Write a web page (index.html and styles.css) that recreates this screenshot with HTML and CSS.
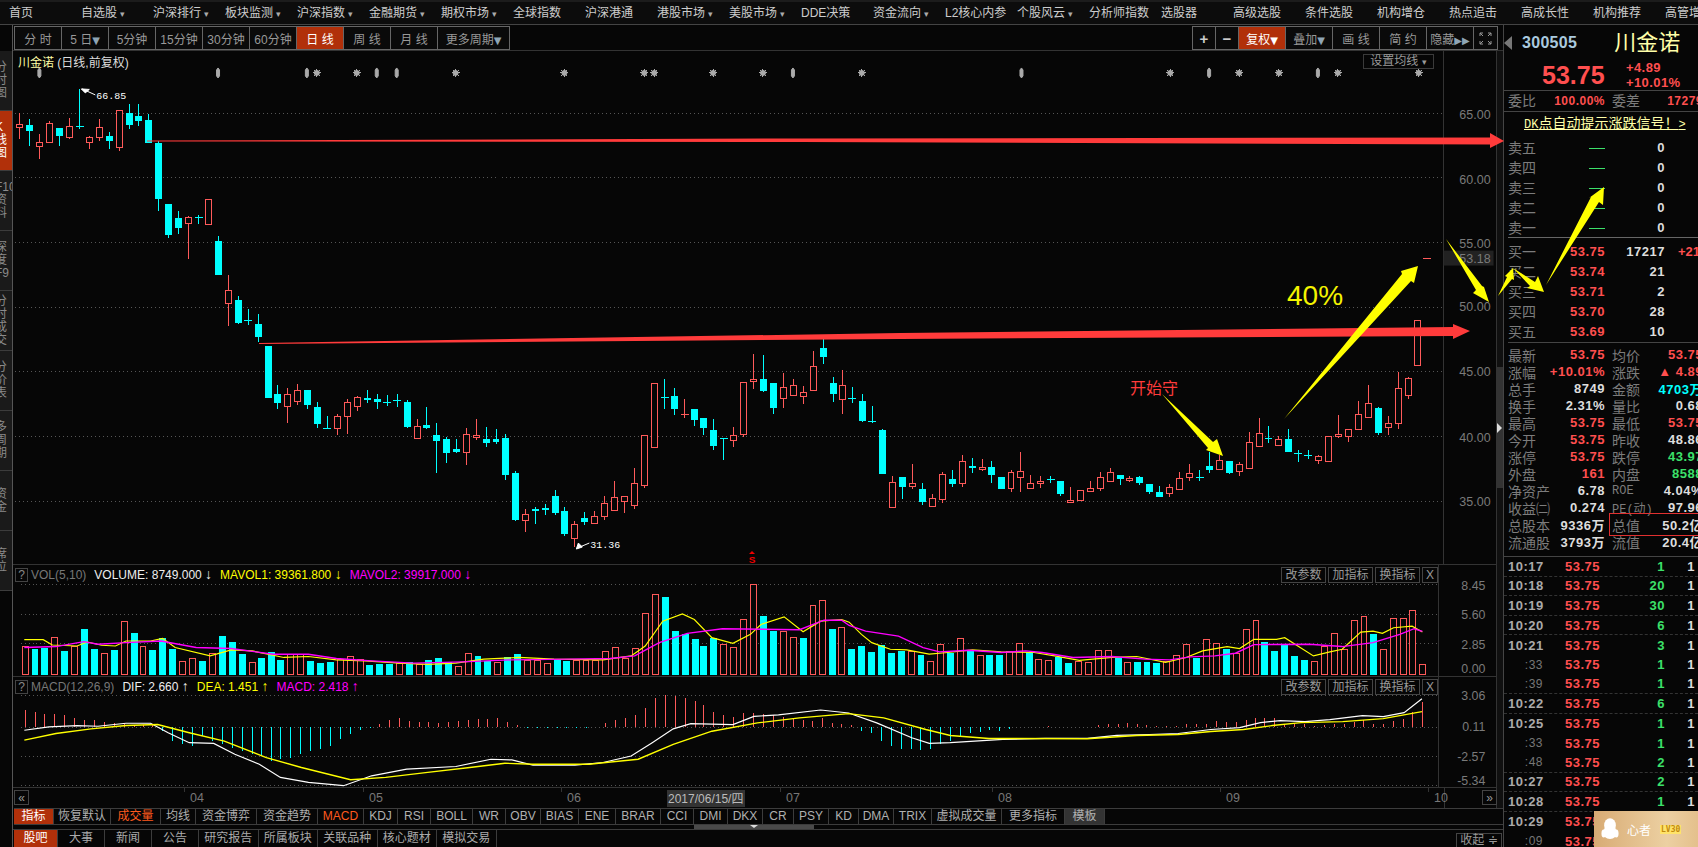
FILE: index.html
```html
<!DOCTYPE html>
<html lang="zh-CN">
<head>
  <meta charset="UTF-8" />
  <title>川金诺 300505 日线</title>
  <link rel="stylesheet" href="styles.css">
</head>
<body>
  <nav class="topnav">
    <a>首页</a><a class="menu">自选股</a><a class="menu">沪深排行</a><a class="menu">板块监测</a>
    <a class="menu">沪深指数</a><a class="menu">金融期货</a><a class="menu">期权市场</a><a>全球指数</a>
    <a>沪深港通</a><a class="menu">港股市场</a><a class="menu">美股市场</a><a>DDE决策</a>
    <a class="menu">资金流向</a><a>L2核心内参</a><a class="menu">个股风云</a><a>分析师指数</a>
    <a>选股器</a><a>高级选股</a><a>条件选股</a><a>机构增仓</a><a>热点追击</a><a>高成长性</a><a>机构推荐</a><a>高管增持</a>
  </nav>

  <div class="workspace">
    <aside class="sidetabs">
      <div class="sidetab"><span>分<br>时<br>图</span></div>
      <div class="sidetab on"><span>K<br>线<br>图</span></div>
      <div class="sidetab"><span>F10<br>资<br>料</span></div>
      <div class="sidetab"><span>深<br>度<br>F9</span></div>
      <div class="sidetab"><span>分<br>时<br>成<br>交</span></div>
      <div class="sidetab"><span>分<br>价<br>表</span></div>
      <div class="sidetab"><span>多<br>周<br>期</span></div>
      <div class="sidetab"><span>资<br>金</span></div>
      <div class="sidetab"><span>席<br>位</span></div>
    </aside>

    <main class="center">
      <div class="toolbar">
        <div class="btn-group">
          <button>分 时</button><button>5 日<i>▼</i></button><button>5分钟</button><button>15分钟</button>
          <button>30分钟</button><button>60分钟</button><button class="on">日 线</button><button>周 线</button>
          <button>月 线</button><button class="wide">更多周期<i>▼</i></button>
        </div>
        <div class="btn-group right">
          <button class="tiny">+</button><button class="tiny">−</button><button class="on">复权<i>▼</i></button>
          <button>叠加<i>▼</i></button><button>画 线</button><button>简 约</button><button>隐藏<i>▶▶</i></button>
          <button class="tiny">
            <svg class="fs-icon" viewBox="0 0 13 13"><path d="M1 4V1h3M9 1h3v3M12 9v3H9M4 12H1V9M1 1l3 3M12 1L9 4M12 12L9 9M1 12l3-3" /></svg>
          </button>
        </div>
      </div>

      <div class="chart-row">
        <div class="chart-col">
          <section class="pane pane-k">
            <svg id="kSvg" class="plot" viewBox="13 51 1484 514"></svg>
            <div class="pane-head">
              <span class="stock-title"><b>川金诺</b> (日线,前复权)</span>
              <span class="ma-set">设置均线 <i>▾</i></span>
            </div>
          </section>

          <section class="pane pane-vol">
            <svg id="volSvg" class="plot" viewBox="13 565 1484 112"></svg>
            <div class="pane-head small">
              <span class="help">?</span>
              <span class="c-gray">VOL(5,10)</span>
              <span class="c-white">VOLUME: 8749.000 <i class="ar">↓</i></span>
              <span class="c-yellow">MAVOL1: 39361.800 <i class="ar">↓</i></span>
              <span class="c-pink">MAVOL2: 39917.000 <i class="ar">↓</i></span>
              <div class="pane-btns"><button>改参数</button><button>加指标</button><button>换指标</button><button class="close">X</button></div>
            </div>
          </section>

          <section class="pane pane-macd">
            <svg id="macdSvg" class="plot" viewBox="13 677 1484 111"></svg>
            <div class="pane-head small">
              <span class="help">?</span>
              <span class="c-gray">MACD(12,26,9)</span>
              <span class="c-white">DIF: 2.660 <i class="ar">↑</i></span>
              <span class="c-yellow">DEA: 1.451 <i class="ar">↑</i></span>
              <span class="c-pink">MACD: 2.418 <i class="ar">↑</i></span>
              <div class="pane-btns"><button>改参数</button><button>加指标</button><button>换指标</button><button class="close">X</button></div>
            </div>
          </section>

          <svg id="timeSvg" class="timeaxis" viewBox="13 788 1484 20"></svg>
        </div>
        <div class="scrollcol"><div class="thumb"><i></i></div></div>
      </div>

      <div class="indicators">
        <a class="on">指标</a><a>恢复默认</a><a class="hot">成交量</a><a>均线</a><a>资金博弈</a><a>资金趋势</a>
        <a class="hot">MACD</a><a>KDJ</a><a>RSI</a><a>BOLL</a><a>WR</a><a>OBV</a><a>BIAS</a><a>ENE</a><a>BRAR</a><a>CCI</a>
        <a>DMI</a><a>DKX</a><a>CR</a><a>PSY</a><a>KD</a><a>DMA</a><a>TRIX</a><a>虚拟成交量</a><a>更多指标</a><a class="tpl">模板</a>
      </div>
      <div class="hscroll"><div class="hthumb"><i></i></div></div>
      <div class="bottomtabs">
        <a class="on">股吧</a><a>大事</a><a>新闻</a><a>公告</a><a>研究报告</a><a>所属板块</a><a>关联品种</a><a>核心题材</a><a>模拟交易</a>
        <span class="collapse">收起 ≑</span>
      </div>
    </main>

    <aside class="quote">
      <div class="code-row">
        <i class="back"></i><span class="code">300505</span><span class="name">川金诺</span>
      </div>
      <div class="price-row">
        <span class="last">53.75</span>
        <div class="change"><span>+4.89</span><span>+10.01%</span></div>
      </div>
      <div class="ratio-row">
        <div class="kv"><label>委比</label><b class="red">100.00%</b></div>
        <div class="kv"><label>委差</label><b class="red">17279</b></div>
      </div>
      <a class="promo"><span class="dk">DK</span>点自动提示涨跌信号！<span class="dk">&gt;</span></a>

      <div class="book asks">
        <div class="level"><label>卖五</label><span><i class="dash"></i></span><b>0</b></div>
        <div class="level"><label>卖四</label><span><i class="dash"></i></span><b>0</b></div>
        <div class="level"><label>卖三</label><span><i class="dash"></i></span><b>0</b></div>
        <div class="level"><label>卖二</label><span><i class="dash"></i></span><b>0</b></div>
        <div class="level"><label>卖一</label><span><i class="dash"></i></span><b>0</b></div>
      </div>
      <div class="book bids">
        <div class="level"><label>买一</label><span class="red">53.75</span><b>17217</b><em>+21</em></div>
        <div class="level"><label>买二</label><span class="red">53.74</span><b>21</b></div>
        <div class="level"><label>买三</label><span class="red">53.71</span><b>2</b></div>
        <div class="level"><label>买四</label><span class="red">53.70</span><b>28</b></div>
        <div class="level"><label>买五</label><span class="red">53.69</span><b>10</b></div>
      </div>

      <div class="stats">
        <div class="kv"><label>最新</label><b class="red">53.75</b></div><div class="kv"><label>均价</label><b class="red">53.75</b></div>
        <div class="kv"><label>涨幅</label><b class="red">+10.01%</b></div><div class="kv"><label>涨跌</label><b class="red">▲ 4.89</b></div>
        <div class="kv"><label>总手</label><b>8749</b></div><div class="kv"><label>金额</label><b class="cyan">4703万</b></div>
        <div class="kv"><label>换手</label><b>2.31%</b></div><div class="kv"><label>量比</label><b>0.68</b></div>
        <div class="kv"><label>最高</label><b class="red">53.75</b></div><div class="kv"><label>最低</label><b class="red">53.75</b></div>
        <div class="kv"><label>今开</label><b class="red">53.75</b></div><div class="kv"><label>昨收</label><b>48.86</b></div>
        <div class="kv"><label>涨停</label><b class="red">53.75</b></div><div class="kv"><label>跌停</label><b class="green">43.97</b></div>
        <div class="kv"><label>外盘</label><b class="red">161</b></div><div class="kv"><label>内盘</label><b class="green">8588</b></div>
        <div class="kv"><label>净资产</label><b>6.78</b></div><div class="kv"><label class="latin">ROE</label><b>4.04%</b></div>
        <div class="kv"><label>收益㈡</label><b>0.274</b></div><div class="kv"><label class="latin">PE(动)</label><b>97.96</b></div>
        <div class="kv"><label>总股本</label><b>9336万</b></div><div class="kv boxed"><label>总值</label><b>50.2亿</b></div>
        <div class="kv"><label>流通股</label><b>3793万</b></div><div class="kv"><label>流值</label><b>20.4亿</b></div>
      </div>

      <div class="ticks">
        <div class="tick end"><b>10:17</b><span>53.75</span><em>1</em><u>1</u></div>
        <div class="tick end"><b>10:18</b><span>53.75</span><em>20</em><u>1</u></div>
        <div class="tick end"><b>10:19</b><span>53.75</span><em>30</em><u>1</u></div>
        <div class="tick end"><b>10:20</b><span>53.75</span><em>6</em><u>1</u></div>
        <div class="tick"><b>10:21</b><span>53.75</span><em>3</em><u>1</u></div>
        <div class="tick"><b class="sec">:33</b><span>53.75</span><em>1</em><u>1</u></div>
        <div class="tick end"><b class="sec">:39</b><span>53.75</span><em>1</em><u>1</u></div>
        <div class="tick end"><b>10:22</b><span>53.75</span><em>6</em><u>1</u></div>
        <div class="tick"><b>10:25</b><span>53.75</span><em>1</em><u>1</u></div>
        <div class="tick"><b class="sec">:33</b><span>53.75</span><em>1</em><u>1</u></div>
        <div class="tick end"><b class="sec">:48</b><span>53.75</span><em>2</em><u>1</u></div>
        <div class="tick end"><b>10:27</b><span>53.75</span><em>2</em><u>1</u></div>
        <div class="tick end"><b>10:28</b><span>53.75</span><em>1</em><u>1</u></div>
        <div class="tick"><b>10:29</b><span>53.75</span><em>1</em><u>1</u></div>
        <div class="tick"><b class="sec">:09</b><span>53.75</span><em>1</em><u>1</u></div>
      </div>
    </aside>
  </div>

  <!-- hand-drawn marks on top of the chart -->
  <svg class="marks" viewBox="0 0 1698 847">
    <polygon class="mark-red" points="147,140.5 800,138.5 1490,137.5 1490,133 1504,141 1490,148 1490,144.5 800,142 147,141.5" />
    <polygon class="mark-red" points="259,343 900,333 1453,327 1453,324 1470,331 1453,339 1453,336 900,339 259,344" />
    <polygon class="mark-yellow" points="1162,394 1213,442 1217,439 1223,456 1206,450 1208,448" />
    <polygon class="mark-yellow" points="1284,419 1402,274 1401,271 1418,266 1414,283 1411,281" />
    <polygon class="mark-yellow" points="1446,239 1476,290 1473,293 1489,302 1484,287 1482,286" />
    <polygon class="mark-yellow" points="1498,296 1507,277 1505,276 1513,268 1514,280 1512,279" />
    <polygon class="mark-yellow" points="1513,268 1535,282 1538,276 1544,292 1527,288 1530,286" />
    <polygon class="mark-yellow" points="1546,285 1591,197 1589,198 1604,187 1603,205 1599,202" />
    <text class="mark-pct" x="1287" y="305">40%</text>
    <text class="mark-note" x="1130" y="394">开始守</text>
  </svg>

  <div class="qq-toast">
    <svg class="penguin" viewBox="0 0 20 26">
      <ellipse cx="10" cy="9" rx="6.5" ry="8" />
      <ellipse cx="10" cy="17" rx="8" ry="7" />
      <ellipse cx="3" cy="18" rx="2.5" ry="4.5" />
      <ellipse cx="17" cy="18" rx="2.5" ry="4.5" />
    </svg>
    <span>心者</span>
    <b>LV30</b>
  </div>

  <script src="chart.js"></script>
</body>
</html>
```

FILE: styles.css
```css
* { box-sizing: border-box; }
html, body { margin: 0; height: 847px; overflow: hidden; }
body {
  position: relative; width: 1698px; background: #060606; color: #bbb;
  font: 12px "Liberation Sans", "Noto Sans CJK SC", sans-serif;
}
i, em, u { font-style: normal; text-decoration: none; }

.topnav {
  display: grid; grid-template-columns: repeat(24, 72px); padding-left: 9px;
  height: 25px; line-height: 22px; background: #0c0c0c; overflow: hidden;
  border-top: 2px solid #1c1c1c; border-bottom: 1px solid #444; color: #ccc;
}
.topnav a { white-space: nowrap; }
.topnav .menu::after { content: " ▾"; font-size: 9px; color: #aaa; }

.workspace { display: flex; height: 822px; }

.sidetabs { width: 13px; padding-top: 26px; border-right: 1px solid #555; overflow: hidden; }
.sidetab {
  height: 60px; display: flex; align-items: center; background: #1a1a1a;
  border-bottom: 1px solid #3c3c3c; color: #8a8a8a; line-height: 13px;
}
.sidetab span { display: block; margin-left: -5px; width: 12px; white-space: nowrap; }
.sidetab.on { background: #b1300a; color: #fff; }

.center { width: 1490px; display: flex; flex-direction: column; }
.toolbar {
  height: 26px; flex: none; display: flex; justify-content: space-between;
  padding: 1px 5px 1px 1px; border-bottom: 1px solid #333;
}
.btn-group { display: flex; height: 24px; border: 1px solid #666; }
.btn-group button {
  width: 47px; padding: 0; background: #0a0a0a; color: #999; border: 0; border-right: 1px solid #666;
  font: 12px "Liberation Sans", "Noto Sans CJK SC", sans-serif; white-space: nowrap;
}
.btn-group button:last-child { border-right: 0; }
.btn-group button.wide { width: 71px; }
.btn-group button.tiny { width: 23px; font-size: 15px; font-weight: 700; color: #ccc; }
.btn-group button.on { background: #b1300a; color: #fff; }
.btn-group i { font-size: 10px; color: #8fa5b5; font-family: "DejaVu Sans", sans-serif; }
.btn-group .on i { color: #fff; }
.fs-icon { display: block; width: 13px; height: 13px; margin: auto; fill: none; stroke: #999; stroke-width: 1; }

.chart-row { display: flex; height: 757px; flex: none; }
.chart-col { width: 1484px; border-right: 1px solid #333; }
.scrollcol { width: 6px; background: #101010; padding-top: 316px; }
.thumb { height: 121px; background: #333; display: flex; align-items: center; }
.thumb i { width: 0; height: 0; border: 5px solid transparent; border-left: 5px solid #ddd; }

.pane { position: relative; border-bottom: 1px solid #333; }
.pane-k { height: 514px; }
.pane-vol { height: 112px; }
.pane-macd { height: 111px; }
.plot { position: absolute; left: 0; top: 0; width: 1484px; height: 100%; display: block; }
.pane-head { position: relative; display: flex; align-items: center; gap: 6px; padding: 2px 58px 0 2px; white-space: nowrap; }
.pane-k .pane-head { padding: 2px 62px 0 5px; justify-content: space-between; }
.stock-title { color: #ddd; }
.stock-title b { font-weight: 400; color: #ffffa8; }
.ma-set { width: 71px; height: 15px; line-height: 13px; border: 1px solid #3a3a3a; color: #999; text-align: center; }
.ma-set i { font-size: 9px; }
.help { width: 13px; height: 14px; line-height: 12px; margin-right: -3px; border: 1px solid #444; text-align: center; color: #888; }
.c-gray { color: #777; margin-right: 2px; }
.c-white { color: #eee; }
.c-yellow { color: #ff0; margin-left: 2px; }
.c-pink { color: #f0f; margin-left: 2px; }
.ar { font-size: 14px; line-height: 12px; }
.pane-btns { margin-left: auto; display: flex; gap: 2px; }
.pane-btns button {
  width: 45px; height: 16px; padding: 0; background: #060606; border: 1px solid #444; color: #999;
  font: 12px/14px "Liberation Sans", "Noto Sans CJK SC", sans-serif;
}
.pane-btns .close { width: 16px; }

.timeaxis { display: block; width: 1484px; height: 20px; }

.indicators {
  height: 17px; flex: none; display: grid; align-items: stretch;
  grid-template-columns: 40px 57px 50px 35px 61px 61px 46px 34px 33px 42px 33px 35px 38px 37px 45px 33px 34px 35px 31px 35px 30px 35px 38px 70px 63px 40px;
  margin-left: 1px; border-top: 1px solid #3c3c3c; border-bottom: 1px solid #3c3c3c;
}
.indicators a { line-height: 15px; text-align: center; border-right: 1px solid #3c3c3c; color: #b0b0b0; white-space: nowrap; }
.indicators .on { background: #b1300a; color: #fff; }
.indicators .hot { color: #ff5a1e; }
.indicators .tpl { background: #333; }

.hscroll { height: 5px; flex: none; border-bottom: 1px solid #3c3c3c; padding-left: 681px; }
.hthumb { width: 120px; height: 4px; background: #4a4a4a; display: flex; justify-content: center; }
.hthumb i { width: 0; height: 0; border: 4px solid transparent; border-top: 3px solid #ddd; border-bottom: 0; }

.bottomtabs { height: 18px; flex: none; display: flex; margin-left: 1px; overflow: hidden; }
.bottomtabs a { width: 47px; line-height: 17px; text-align: center; border-right: 1px solid #3c3c3c; color: #aaa; }
.bottomtabs a:nth-child(n+5) { width: 59.5px; }
.bottomtabs .on { width: 44px; background: #b1300a; color: #fff; }
.collapse { margin: 3px 1px 0 auto; width: 46px; height: 15px; line-height: 13px; text-align: center; border: 1px solid #444; color: #999; }

.quote { width: 195px; border-left: 1px solid #444; overflow: hidden; background: #060606; }
.quote b { font-weight: 700; color: #ddd; letter-spacing: .5px; }
.red { color: #ff4f4f !important; }
.cyan { color: #0ff !important; }
.green { color: #3ce06a !important; }

.code-row { height: 35px; display: flex; align-items: center; }
.back { flex: none; width: 0; height: 0; border: 7px solid transparent; border-left: 0; border-right: 8px solid #777; }
.code { margin-left: 10px; font-size: 16px; font-weight: 700; color: #a9c9de; letter-spacing: .3px; }
.name { margin-left: 37px; font-size: 22px; line-height: 35px; color: #ffffa8; white-space: nowrap; }
.price-row { height: 31px; display: flex; align-items: center; padding-left: 38px; border-bottom: 1px solid #444; }
.last { width: 84px; font-size: 25px; font-weight: 700; color: #ff4f4f; }
.change { display: flex; flex-direction: column; font-size: 13px; font-weight: 700; line-height: 15px; color: #ff4f4f; letter-spacing: .4px; }

.kv { display: flex; justify-content: space-between; align-items: center; min-width: 0; white-space: nowrap; }
.kv label { font-size: 14px; color: #7c7c7c; }
.kv label.latin { font-size: 12px; font-family: "Liberation Mono", "Noto Sans CJK SC", monospace; }
.ratio-row, .stats { display: grid; grid-template-columns: 97px 91px; column-gap: 7px; padding-left: 4px; }
.ratio-row { height: 21px; border-bottom: 1px solid #444; line-height: 20px; }
.promo { display: block; height: 25px; line-height: 22px; padding-left: 20px; font-size: 14px; color: #ffffa8; text-decoration: underline; white-space: nowrap; }
.promo .dk { font: 12px "Liberation Mono", monospace; }

.book { padding-left: 4px; }
.asks { height: 101px; border-bottom: 1px solid #666; margin-left: 4px; padding-left: 0; }
.bids { height: 105px; padding: 3px 0 0; margin-left: 4px; border-bottom: 1px solid #444; }
.level { height: 20px; display: grid; grid-template-columns: 30px 67px 60px 35px; align-items: center; white-space: nowrap; }
.level label { font-size: 14px; color: #7c7c7c; }
.level span { font-size: 13px; font-weight: 700; text-align: right; letter-spacing: .5px; }
.level b { text-align: right; font-size: 13px; }
.level em { text-align: right; color: #ff4f4f; font-size: 13px; font-weight: 700; }
.dash { display: inline-block; width: 16px; height: 1px; background: #3ce06a; vertical-align: middle; }

.stats { grid-auto-rows: 17px; padding-top: 3px; height: 214px; border-bottom: 1px solid #444; }
.stats b { font-size: 13px; }
.boxed { outline: 1px solid #e03030; outline-offset: 2px; }

.tick {
  height: 19.6px; display: grid; grid-template-columns: 35px 57px 65px 30px; align-items: center; padding-left: 4px;
  font-size: 13px; font-weight: 700; letter-spacing: .5px; white-space: nowrap;
}
.tick.end { border-bottom: 1px dashed #333; }
.tick b { color: #aaa; text-align: right; }
.tick b.sec { font-size: 12px; font-weight: 400; color: #777; }
.tick span { text-align: right; color: #ff4f4f; }
.tick em { text-align: right; color: #3ce06a; }
.tick u { text-align: right; color: #ddd; }

/* svg chart parts */
.grid { stroke: #555; stroke-dasharray: 1 3; stroke-width: 1; }
.axisline { stroke: #333; stroke-width: 1; }
.axis-label { fill: #7a7a7a; font-size: 12.5px; text-anchor: end; }
.up-wick { stroke: #ff5a5a; stroke-width: 1; }
.up-body { fill: #060606; stroke: #ff5a5a; stroke-width: 1; }
.down-wick { stroke: #0ff; stroke-width: 1; }
.down-body { fill: #0ff; }
.kmark { stroke: #aaa; fill: #aaa; stroke-width: 1; }
.tagbox { fill: #222; }
.peak { fill: #fff; font: 10px "Liberation Mono", monospace; }
.peak-line { stroke: #fff; stroke-width: 1; fill: #fff; }
.sig { fill: #e00; font: bold 10px "Liberation Sans", sans-serif; text-anchor: middle; }
.ma-y { fill: none; stroke: #ff0; stroke-width: 1.2; }
.ma-m { fill: none; stroke: #f0f; stroke-width: 1.4; }
.dif { fill: none; stroke: #fff; stroke-width: 1.2; }
.dea { fill: none; stroke: #ff0; stroke-width: 1.4; }
.month { fill: #777; font-size: 12.5px; }
.date-box { fill: #333; }
.date-label { fill: #bbb; font-size: 12px; }
.pagebtn { fill: #060606; stroke: #444; }
.pagetxt { fill: #999; font-size: 12px; text-anchor: middle; }

.marks { position: absolute; left: 0; top: 0; width: 1698px; height: 847px; pointer-events: none; }
.mark-red { fill: #ff3b3b; }
.mark-yellow { fill: #ff0; }
.mark-pct { fill: #f4f400; font: 28px "Liberation Sans", sans-serif; }
.mark-note { fill: #ff3b3b; font: 16px "Noto Sans CJK SC", sans-serif; }

.qq-toast {
  position: absolute; left: 1594px; top: 811px; width: 104px; height: 36px;
  display: flex; align-items: center; padding-left: 7px;
  background: linear-gradient(90deg, #d8ab74, #ecd0a2 70%, #e4c08c);
}
.penguin { width: 18px; height: 24px; fill: #fff; }
.qq-toast span { margin-left: 8px; color: #fff; }
.qq-toast b { margin-left: 9px; padding: 0 1px; font: bold 8px "DejaVu Sans Mono", monospace; color: #c08a10; background: #ffe36a; }
```

FILE: chart.js
```js
const UP = "r", DOWN = "c";
// type, body top, body bottom, wick top, wick bottom (page pixels)
const candles = [
  [UP,124,127,113,139],[DOWN,125,131,119,146],[UP,142,146,134,159],[UP,123,142,121,142],[DOWN,128,136,128,146],
  [UP,126,137,118,139],[DOWN,126,127,89,129],[UP,137,142,136,149],[UP,127,137,119,141],[DOWN,136,141,132,149],
  [UP,110,147,110,151],[DOWN,113,125,104,129],[DOWN,116,121,104,126],[DOWN,120,143,114,143],[DOWN,143,199,141,211],
  [DOWN,204,235,204,238],[DOWN,218,228,211,234],[UP,217,223,216,259],[DOWN,217,218,215,224],[UP,199,224,199,224],
  [DOWN,241,275,236,275],[UP,290,303,275,327],[DOWN,300,324,296,325],[DOWN,321,322,310,326],[DOWN,325,338,315,343],
  [DOWN,347,399,347,399],[DOWN,395,404,386,410],[UP,395,407,389,424],[UP,391,402,385,406],[DOWN,391,406,391,410],
  [DOWN,408,425,403,429],[DOWN,429,430,417,430],[UP,417,429,415,436],[UP,403,417,400,435],[UP,398,407,397,412],
  [DOWN,399,401,391,404],[DOWN,400,403,395,410],[DOWN,403,404,396,407],[DOWN,401,402,395,408],[DOWN,403,428,401,429],
  [UP,427,439,420,439],[DOWN,426,429,408,430],[DOWN,436,442,424,474],[DOWN,440,454,438,464],[DOWN,450,453,440,454],
  [UP,435,453,429,466],[UP,436,438,420,441],[DOWN,440,444,428,448],[DOWN,440,443,430,445],[DOWN,439,476,435,481],
  [DOWN,474,521,472,522],[UP,515,521,510,533],[DOWN,510,512,508,525],[DOWN,509,511,505,516],[DOWN,497,514,491,516],
  [DOWN,512,535,508,537],[UP,525,539,522,548],[DOWN,519,523,513,526],[UP,517,524,512,524],[UP,504,517,497,521],
  [UP,498,511,482,511],[UP,497,502,497,514],[UP,484,506,469,510],[UP,436,486,436,489],[UP,384,448,384,448],
  [DOWN,398,399,380,410],[DOWN,397,410,389,416],[UP,415,416,400,419],[DOWN,410,421,410,427],[DOWN,419,429,419,436],
  [DOWN,431,447,420,451],[DOWN,439,440,439,461],[UP,436,441,428,448],[UP,383,435,383,438],[UP,380,382,355,390],
  [DOWN,380,392,356,393],[DOWN,384,409,384,415],[UP,388,399,374,409],[UP,386,396,380,397],[UP,393,397,387,405],
  [UP,367,391,352,391],[DOWN,349,358,340,365],[DOWN,384,395,378,403],[UP,386,400,371,415],[DOWN,399,400,388,404],
  [DOWN,402,422,395,423],[DOWN,422,423,407,424],[DOWN,431,475,430,475],[UP,483,508,477,508],[DOWN,478,488,478,500],
  [UP,484,487,465,490],[DOWN,490,503,484,506],[UP,499,507,495,507],[UP,475,500,473,504],[DOWN,480,485,471,488],
  [UP,462,484,456,488],[DOWN,467,469,459,474],[UP,468,470,460,472],[DOWN,468,476,462,484],[DOWN,478,490,478,490],
  [UP,473,489,471,493],[UP,472,478,453,493],[UP,484,489,476,489],[UP,482,484,477,489],[DOWN,480,481,477,484],
  [DOWN,482,495,482,497],[UP,501,503,488,503],[UP,491,501,491,501],[UP,489,492,482,492],[UP,478,489,473,492],
  [UP,473,482,469,482],[DOWN,476,480,476,486],[UP,479,481,477,483],[DOWN,478,484,477,486],[DOWN,485,493,485,495],
  [DOWN,493,498,487,498],[UP,488,494,485,498],[UP,479,490,473,490],[UP,474,478,465,482],[DOWN,478,479,471,482],
  [DOWN,467,471,453,474],[UP,461,470,456,470],[DOWN,462,474,462,475],[UP,465,472,463,477],[UP,443,469,433,470],
  [UP,434,447,419,447],[DOWN,439,440,427,444],[UP,440,446,437,446],[DOWN,440,453,430,453],[DOWN,454,455,451,463],
  [DOWN,456,457,451,460],[UP,457,461,456,465],[UP,437,462,437,462],[UP,435,437,416,439],[UP,430,437,430,443],
  [UP,415,430,402,430],[UP,404,418,386,418],[DOWN,409,434,408,436],[UP,424,428,417,436],[UP,389,424,373,430],
  [UP,379,396,378,400],[UP,321,366,321,366],[UP,258,258,258,258],
];

const volumes = [
  [UP,28],[DOWN,25],[DOWN,26],[UP,37],[DOWN,23],[UP,28],[DOWN,45],[DOWN,25],[UP,21],[DOWN,24],[UP,53],[DOWN,41],[UP,28],[DOWN,24],
  [DOWN,36],[DOWN,25],[UP,13],[UP,16],[DOWN,13],[UP,21],[DOWN,38],[DOWN,32],[DOWN,20],[UP,12],[DOWN,16],[DOWN,22],[DOWN,14],[UP,20],
  [UP,20],[DOWN,13],[DOWN,11],[DOWN,12],[UP,15],[UP,18],[UP,15],[DOWN,9],[DOWN,10],[DOWN,10],[UP,11],[DOWN,12],[UP,10],[DOWN,14],
  [DOWN,16],[DOWN,12],[UP,8],[UP,21],[DOWN,18],[DOWN,13],[UP,12],[DOWN,17],[DOWN,20],[UP,14],[UP,14],[UP,11],[DOWN,15],[DOWN,13],
  [UP,14],[UP,14],[UP,14],[UP,23],[UP,27],[UP,16],[UP,26],[UP,62],[UP,81],[DOWN,78],[DOWN,43],[DOWN,40],[DOWN,35],[DOWN,28],[DOWN,36],
  [UP,30],[UP,27],[UP,56],[UP,91],[DOWN,59],[DOWN,43],[UP,43],[UP,37],[DOWN,36],[UP,70],[UP,75],[DOWN,45],[UP,47],[DOWN,25],[DOWN,28],
  [DOWN,22],[DOWN,29],[DOWN,21],[DOWN,23],[UP,23],[DOWN,19],[UP,13],[UP,30],[DOWN,21],[UP,36],[DOWN,23],[UP,19],[DOWN,19],[DOWN,19],
  [UP,23],[UP,31],[DOWN,22],[UP,15],[UP,14],[DOWN,17],[DOWN,11],[UP,13],[UP,12],[UP,24],[UP,24],[DOWN,16],[UP,12],[DOWN,12],[DOWN,12],
  [DOWN,11],[UP,13],[UP,19],[UP,30],[DOWN,16],[UP,35],[UP,31],[DOWN,25],[UP,21],[UP,45],[UP,54],[DOWN,32],[DOWN,23],[DOWN,29],[DOWN,18],
  [DOWN,14],[UP,13],[UP,28],[UP,41],[UP,25],[UP,55],[UP,59],[DOWN,40],[UP,25],[UP,57],[UP,57],[UP,65],[UP,10],
];

// macd histogram height per bar, positive goes up
const hist = [
  17,15,13,13,12,9,7,7,5,4,3,2,2,2,-4,-15,-18,-20,-10,-15,-18,-22,-25,-28,-30,-35,-33,-32,-28,-25,-23,-20,-13,-8,-3,-1,
  3,7,9,6,5,5,4,5,6,7,8,8,9,5,2,-1,-1,-1,-1,-1,-1,-1,0,4,7,9,12,19,29,32,31,29,26,22,15,12,10,14,14,13,12,10,8,7,6,9,4,3,2,
  -4,-7,-15,-20,-23,-23,-24,-23,-18,-15,-10,-7,-5,-3,-4,-2,0,0,0,1,0,0,0,0,2,3,3,4,3,2,1,1,1,3,3,3,6,5,5,7,9,9,9,3,3,3,1,2,3,3,5,7,3,3,6,8,15,25,
];

const barX = i => Math.round(18.3 + 9.93 * i);
const path = pts => pts.map(p => p[0].toFixed(1) + "," + p[1].toFixed(1)).join(" ");
const fromWide = pts => pts.map(([x, y]) => [x / 1.4126, 440 + y / 3]);
const fromRight = pts => pts.map(([x, y]) => [850 + x / 2.412, 560 + y / 3]);

const line = (x1, y1, x2, y2, cls) => `<line x1="${x1}" y1="${y1}" x2="${x2}" y2="${y2}" class="${cls}" shape-rendering="crispEdges"/>`;
const label = (x, y, txt, cls) => `<text x="${x}" y="${y}" class="${cls}">${txt}</text>`;
const grid = y => line(14, y + 0.5, 1444, y + 0.5, "grid");

function drawPrice() {
  const out = [];
  [113, 177, 242, 307, 372, 437, 502].forEach(y => out.push(grid(y)));
  out.push(line(1444.5, 51, 1444.5, 565, "axisline"));

  candles.forEach(([type, top, bottom, wickTop, wickBottom], i) => {
    const x = barX(i) + 0.5;
    const name = type === UP ? "up" : "down";
    out.push(line(x, wickTop, x, wickBottom, name + "-wick"));
    if (bottom - top < 2) {
      out.push(line(x - 4, top + 0.5, x + 4, top + 0.5, name + "-wick"));
    } else if (type === UP) {
      out.push(`<rect x="${x - 3}" y="${top + 0.5}" width="6" height="${bottom - top}" class="up-body" shape-rendering="crispEdges"/>`);
    } else {
      out.push(`<rect x="${x - 3.5}" y="${top}" width="7" height="${bottom - top}" class="down-body" shape-rendering="crispEdges"/>`);
    }
  });

  // event markers along the top of the chart
  const arrows = [38, 217, 306, 376, 396, 793, 1022, 1210, 1319];
  const stars = [316, 356, 455, 564, 644, 654, 713, 763, 862, 1171, 1240, 1280, 1339, 1420];
  arrows.forEach(x => out.push(`<polygon class="kmark" points="${x},68 ${x + 1.5},70 ${x + 1.5},76 ${x},78 ${x - 1.5},76 ${x - 1.5},70"/>`));
  stars.forEach(x => {
    out.push(`<circle class="kmark" cx="${x}" cy="73" r="2.5"/>`);
    out.push(line(x - 4, 73, x + 4, 73, "kmark"), line(x, 69, x, 77, "kmark"), line(x - 3, 70, x + 3, 76, "kmark"), line(x - 3, 76, x + 3, 70, "kmark"));
  });

  out.push(`<polyline class="peak-line" points="81,89 94,95" fill="none"/><polygon class="peak-line" points="80,89 88,89.5 84,93"/>`);
  out.push(label(95, 99, "66.85", "peak"));
  out.push(`<polyline class="peak-line" points="577,549 589,544" fill="none"/><polygon class="peak-line" points="576,550 578,544 582,548"/>`);
  out.push(label(590, 549, "31.36", "peak"));
  out.push(`<polygon points="752,552 755,555 749,555" fill="#e00"/>`, label(752, 564, "S", "sig"));

  [[65, 119], [60, 184], [55, 248], [50, 312], [45, 377], [40, 443], [35, 507]].forEach(([v, y]) => out.push(label(1492, y, v + ".00", "axis-label")));
  out.push(`<rect x="1445" y="251" width="50" height="15" class="tagbox"/>`, label(1492, 263, "53.18", "axis-label"));

  document.getElementById("kSvg").innerHTML = out.join("");
}

function drawVolume() {
  const out = [];
  [584, 614, 644].forEach(y => out.push(grid(y)));
  out.push(line(1444.5, 565, 1444.5, 677, "axisline"));
  volumes.forEach(([type, h], i) => {
    const x = barX(i) + 0.5;
    if (type === UP) out.push(`<rect x="${x - 3}" y="${675.5 - h}" width="6" height="${h}" class="up-body" shape-rendering="crispEdges"/>`);
    else out.push(`<rect x="${x - 3.5}" y="${675 - h}" width="7" height="${h + 1}" class="down-body" shape-rendering="crispEdges"/>`);
  });

  const ma1 = fromWide([[25,601],[52,601],[65,617],[100,620],[115,608],[135,618],[155,620],[170,605],[205,605],[222,597],[240,625],[290,650],[320,632],[350,635],[395,655],[430,652],[470,662],[510,665],[560,672],[600,676],[640,672],[680,660],[730,655],[780,660],[850,662],[890,650],[910,620],[935,545],[963,523],[980,540],[1005,595],[1035,612],[1060,585],[1075,555],[1108,532],[1135,577],[1160,545],[1190,540]])
    .concat(fromRight([[0,188],[30,225],[55,250],[100,270],[140,272],[195,285],[240,280],[300,272],[370,278],[450,280],[500,290],[560,304],[640,295],[700,292],[770,310],[820,295],[860,275],[920,262],[950,268],[985,240],[1040,240],[1060,235],[1130,290],[1170,278],[1200,270],[1245,218],[1275,215],[1298,222],[1325,205],[1370,200],[1395,218]]));
  const ma2 = fromWide([[25,625],[70,622],[110,607],[130,615],[170,610],[220,605],[270,625],[320,628],[380,645],[430,645],[470,658],[520,665],[580,672],[650,668],[720,662],[800,660],[860,658],[895,650],[930,610],[970,582],[1020,568],[1130,571],[1165,542],[1190,542]])
    .concat(fromRight([[0,198],[40,215],[120,230],[180,265],[220,278],[290,273],[370,280],[430,275],[470,280],[545,295],[640,292],[720,300],[780,302],[830,293],[890,290],[940,282],[985,256],[1120,255],[1200,262],[1275,250],[1340,225],[1375,208],[1395,216]]));
  out.push(`<polyline class="ma-y" points="${path(ma1)}"/><polyline class="ma-m" points="${path(ma2)}"/>`);

  [[8.45, 590], [5.60, 620], [2.85, 650], [0, 674]].forEach(([v, y]) => out.push(label(1492, y, v.toFixed(2), "axis-label")));
  document.getElementById("volSvg").innerHTML = out.join("");
}

function drawMacd() {
  const out = [];
  [695, 727, 757, 786].forEach(y => out.push(grid(y)));
  out.push(line(1444.5, 677, 1444.5, 788, "axisline"));
  hist.forEach((h, i) => {
    if (!h) return;
    const x = barX(i) + 0.5;
    out.push(line(x, 727, x, 727 - h, h > 0 ? "up-wick" : "down-wick"));
  });

  const dif = fromWide([[25,872],[60,862],[100,858],[130,860],[170,851],[205,851],[230,880],[260,910],[295,912],[325,945],[360,975],[390,1015],[430,1030],[480,1040],[520,1010],[570,990],[640,982],[690,960],[720,962],[750,978],[810,978],[850,970],[890,950],[920,910],[950,868],[975,852],[1035,855],[1065,830],[1100,826],[1160,811],[1200,820],[1240,850],[1290,895],[1315,912],[1345,910],[1420,900],[1480,897],[1540,897]])
    .concat([[1120,736],[1153,735],[1182,734],[1215,730],[1244,728],[1265,723],[1285,721],[1310,722],[1335,720],[1368,716],[1389,717],[1410,713],[1428,699]]);
  const dea = fromWide([[25,902],[70,882],[120,868],[170,858],[215,855],[260,880],[310,905],[370,955],[420,985],[490,1022],[540,1015],[600,1000],[660,985],[710,972],[750,975],[830,975],[900,960],[950,915],[1005,875],[1070,850],[1130,835],[1200,822],[1250,835],[1310,870],[1345,888],[1400,897],[1540,898]])
    .concat([[1140,736],[1182,735],[1215,732],[1248,730],[1277,726],[1306,723],[1348,722],[1389,719],[1428,712]]);
  out.push(`<polyline class="dif" points="${path(dif)}"/><polyline class="dea" points="${path(dea)}"/>`);

  [["3.06", 700], ["0.11", 732], ["-2.57", 762], ["-5.34", 786]].forEach(([v, y]) => out.push(label(1492, y, v, "axis-label")));
  document.getElementById("macdSvg").innerHTML = out.join("");
}

function drawTime() {
  const out = [];
  out.push(line(1444.5, 788, 1444.5, 808, "axisline"));
  [["04", 184], ["05", 363], ["06", 561], ["07", 780], ["08", 992], ["09", 1220], ["10", 1428]].forEach(([m, x]) => {
    out.push(line(x + 0.5, 788, x + 0.5, 792, "axisline"), label(x + 6, 802, m, "month"));
  });
  out.push(`<rect x="667" y="790" width="78" height="17" class="date-box"/>`, label(668, 803, "2017/06/15/四", "date-label"));
  out.push(`<rect x="14.5" y="790.5" width="14" height="14" class="pagebtn"/>`, label(21.5, 802, "«", "pagetxt"));
  out.push(`<rect x="1482.5" y="790.5" width="14" height="14" class="pagebtn"/>`, label(1489.5, 802, "»", "pagetxt"));
  document.getElementById("timeSvg").innerHTML = out.join("");
}

drawPrice();
drawVolume();
drawMacd();
drawTime();
```
